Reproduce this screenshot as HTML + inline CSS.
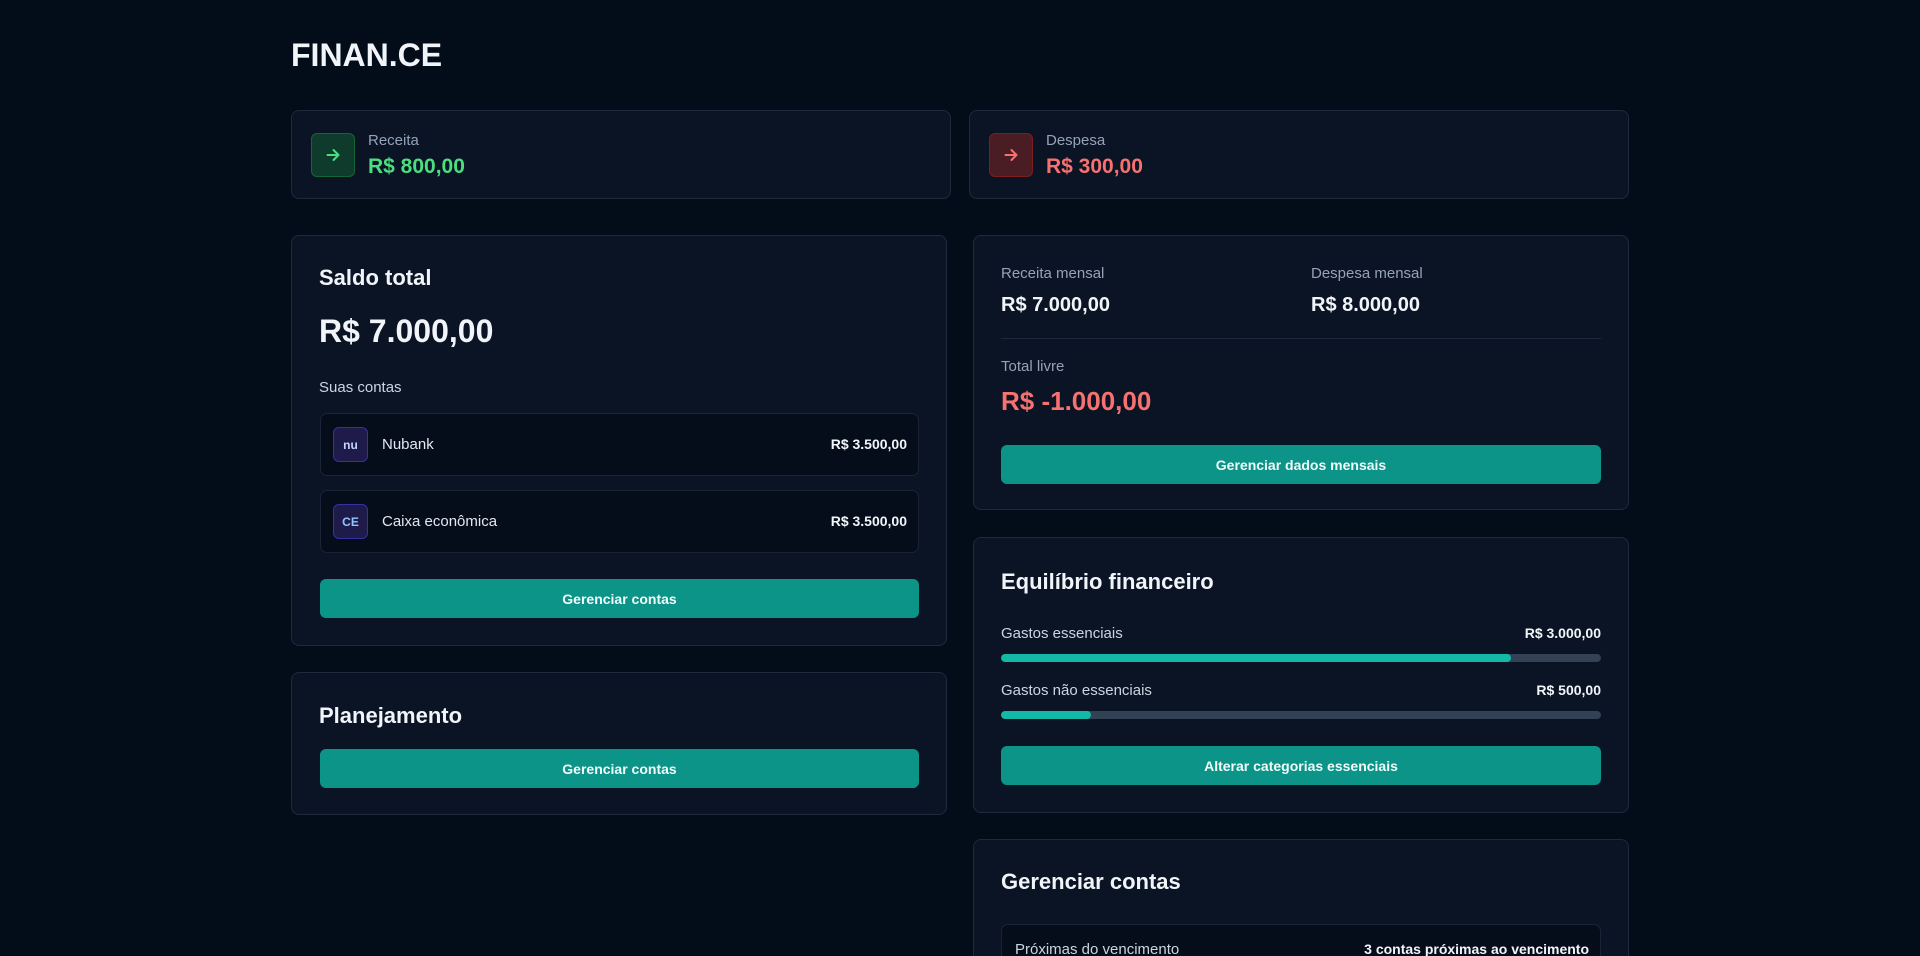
<!DOCTYPE html>
<html><head><meta charset="utf-8">
<style>
*{box-sizing:border-box;margin:0;padding:0}
html,body{width:1920px;height:956px;overflow:hidden;background:#020d19}
body{font-family:"Liberation Sans",sans-serif;color:#f1f5f9}
#wrap{position:relative;width:1920px;height:956px;overflow:hidden}
.abs{position:absolute}
.card{position:absolute;background:#0b1424;border:1px solid #1e293b;border-radius:8px}
.lbl{color:#94a3b8;font-size:15px}
.btn{position:absolute;background:#0d9488;border-radius:6px;color:#f0fdfa;font-weight:bold;font-size:14px;display:flex;align-items:center;justify-content:center}
.h2{font-size:22px;font-weight:bold;position:absolute}
.row{position:absolute;left:28px;width:599px;height:63px;background:#050d1a;border:1px solid #1a2436;border-radius:7px}
.ico{position:absolute;left:12px;top:13px;width:35px;height:35px;border-radius:6px;background:#1e1b4b;border:1px solid #3730a3;font-size:12px;font-weight:bold;display:flex;align-items:center;justify-content:center}
.bar{position:absolute;left:27px;width:600px;height:8px;background:#334155;border-radius:4px;overflow:hidden}
.bar div{height:100%;background:#14b8a6;border-radius:4px}
.ib{position:absolute;left:19px;top:22px;width:44px;height:44px;border-radius:6px;display:flex;align-items:center;justify-content:center}
</style></head><body><div id="wrap">
<div class="abs" style="left:291px;top:37px;font-size:32px;font-weight:bold">FINAN.CE</div>

<div class="card" style="left:291px;top:110px;width:660px;height:89px">
 <div class="ib" style="background:#0f3b2c;border:1px solid #166534"><svg width="14" height="14" viewBox="0 0 14 14" fill="none" stroke="#4ade80" stroke-width="2" stroke-linecap="round" stroke-linejoin="round"><path d="M1.5 7h11M7.5 2l5 5-5 5"/></svg></div>
 <div class="abs lbl" style="left:76px;top:21px">Receita</div>
 <div class="abs" style="left:76px;top:44px;font-size:21px;font-weight:bold;color:#4ade80">R$ 800,00</div>
</div>
<div class="card" style="left:969px;top:110px;width:660px;height:89px">
 <div class="ib" style="background:#4a1d24;border:1px solid #7f1d1d"><svg width="14" height="14" viewBox="0 0 14 14" fill="none" stroke="#f87171" stroke-width="2" stroke-linecap="round" stroke-linejoin="round"><path d="M1.5 7h11M7.5 2l5 5-5 5"/></svg></div>
 <div class="abs lbl" style="left:76px;top:21px">Despesa</div>
 <div class="abs" style="left:76px;top:44px;font-size:21px;font-weight:bold;color:#f87171">R$ 300,00</div>
</div>

<div class="card" style="left:291px;top:235px;width:656px;height:411px">
 <div class="h2" style="left:27px;top:29px">Saldo total</div>
 <div class="abs" style="left:27px;top:77px;font-size:32px;font-weight:bold">R$ 7.000,00</div>
 <div class="abs" style="left:27px;top:143px;font-size:15px;color:#cbd5e1">Suas contas</div>
 <div class="row" style="top:177px"><div class="ico" style="color:#c7d2fe">nu</div><div class="abs" style="left:61px;top:22px;font-size:15px;color:#e2e8f0">Nubank</div><div class="abs" style="right:11px;top:22px;font-size:14px;font-weight:bold">R$ 3.500,00</div></div>
 <div class="row" style="top:254px"><div class="ico" style="color:#93c5fd">CE</div><div class="abs" style="left:61px;top:22px;font-size:15px;color:#e2e8f0">Caixa econômica</div><div class="abs" style="right:11px;top:22px;font-size:14px;font-weight:bold">R$ 3.500,00</div></div>
 <div class="btn" style="left:28px;top:343px;width:599px;height:39px">Gerenciar contas</div>
</div>

<div class="card" style="left:291px;top:672px;width:656px;height:143px">
 <div class="h2" style="left:27px;top:30px">Planejamento</div>
 <div class="btn" style="left:28px;top:76px;width:599px;height:39px">Gerenciar contas</div>
</div>

<div class="card" style="left:973px;top:235px;width:656px;height:275px">
 <div class="abs lbl" style="left:27px;top:29px">Receita mensal</div>
 <div class="abs" style="left:27px;top:58px;font-size:20px;font-weight:bold">R$ 7.000,00</div>
 <div class="abs lbl" style="left:337px;top:29px">Despesa mensal</div>
 <div class="abs" style="left:337px;top:58px;font-size:20px;font-weight:bold">R$ 8.000,00</div>
 <div class="abs" style="left:27px;top:102px;width:600px;height:1px;background:#1e293b"></div>
 <div class="abs lbl" style="left:27px;top:122px">Total livre</div>
 <div class="abs" style="left:27px;top:150px;font-size:26px;font-weight:bold;color:#f87171">R$ -1.000,00</div>
 <div class="btn" style="left:27px;top:209px;width:600px;height:39px">Gerenciar dados mensais</div>
</div>

<div class="card" style="left:973px;top:537px;width:656px;height:276px">
 <div class="h2" style="left:27px;top:31px">Equilíbrio financeiro</div>
 <div class="abs" style="left:27px;top:87px;font-size:15px;color:#cbd5e1">Gastos essenciais</div>
 <div class="abs" style="right:27px;top:87px;font-size:14px;font-weight:bold">R$ 3.000,00</div>
 <div class="bar" style="top:116px"><div style="width:85%"></div></div>
 <div class="abs" style="left:27px;top:144px;font-size:15px;color:#cbd5e1">Gastos não essenciais</div>
 <div class="abs" style="right:27px;top:144px;font-size:14px;font-weight:bold">R$ 500,00</div>
 <div class="bar" style="top:173px"><div style="width:15%"></div></div>
 <div class="btn" style="left:27px;top:208px;width:600px;height:39px">Alterar categorias essenciais</div>
</div>

<div class="card" style="left:973px;top:839px;width:656px;height:140px">
 <div class="h2" style="left:27px;top:29px">Gerenciar contas</div>
 <div class="abs" style="left:27px;top:84px;width:600px;height:60px;background:#050d1a;border:1px solid #1a2436;border-radius:7px">
  <div class="abs" style="left:13px;top:16px;font-size:15px;color:#cbd5e1">Próximas do vencimento</div>
  <div class="abs" style="right:11px;top:16px;font-size:14px;font-weight:bold">3 contas próximas ao vencimento</div>
 </div>
</div>
</div></body></html>
